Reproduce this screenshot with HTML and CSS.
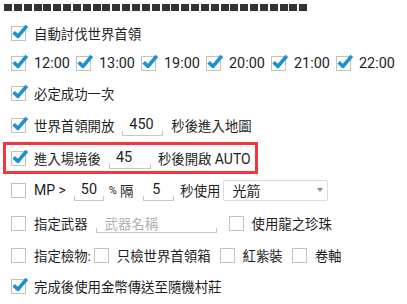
FILE: index.html
```html
<!DOCTYPE html>
<html lang="zh-Hant">
<head>
    <meta charset="UTF-8">
    <meta name="viewport" content="width=device-width, initial-scale=1.0">
    <title>世界首領設定</title>
    <link rel="stylesheet" href="styles.css">
</head>
<body>
    <div class="page">
        <div class="tofu">
            <span></span><span></span><span></span><span></span><span></span><span></span><span></span><span></span>
            <span></span><span></span><span></span><span></span><span></span><span></span><span></span><span></span>
            <span></span><span></span><span></span><span></span><span></span><span></span><span></span><span></span>
            <span></span><span></span><span></span><span></span><span></span><span></span><span></span>
        </div>

        <div class="row">
            <svg class="cb" viewBox="0 0 15 15"><rect x="0.5" y="0.5" width="14" height="14"/><path d="M2.6 6.2 L7 10.4 L15.8 -0.2"/></svg>
            <span>自動討伐世界首領</span>
        </div>

        <div class="row">
            <label class="time"><svg class="cb" viewBox="0 0 15 15"><rect x="0.5" y="0.5" width="14" height="14"/><path d="M2.6 6.2 L7 10.4 L15.8 -0.2"/></svg>12:00</label>
            <label class="time"><svg class="cb" viewBox="0 0 15 15"><rect x="0.5" y="0.5" width="14" height="14"/><path d="M2.6 6.2 L7 10.4 L15.8 -0.2"/></svg>13:00</label>
            <label class="time"><svg class="cb" viewBox="0 0 15 15"><rect x="0.5" y="0.5" width="14" height="14"/><path d="M2.6 6.2 L7 10.4 L15.8 -0.2"/></svg>19:00</label>
            <label class="time"><svg class="cb" viewBox="0 0 15 15"><rect x="0.5" y="0.5" width="14" height="14"/><path d="M2.6 6.2 L7 10.4 L15.8 -0.2"/></svg>20:00</label>
            <label class="time"><svg class="cb" viewBox="0 0 15 15"><rect x="0.5" y="0.5" width="14" height="14"/><path d="M2.6 6.2 L7 10.4 L15.8 -0.2"/></svg>21:00</label>
            <label class="time"><svg class="cb" viewBox="0 0 15 15"><rect x="0.5" y="0.5" width="14" height="14"/><path d="M2.6 6.2 L7 10.4 L15.8 -0.2"/></svg>22:00</label>
        </div>

        <div class="row">
            <svg class="cb" viewBox="0 0 15 15"><rect x="0.5" y="0.5" width="14" height="14"/><path d="M2.6 6.2 L7 10.4 L15.8 -0.2"/></svg>
            <span>必定成功一次</span>
        </div>

        <div class="row tall">
            <svg class="cb" viewBox="0 0 15 15"><rect x="0.5" y="0.5" width="14" height="14"/><path d="M2.6 6.2 L7 10.4 L15.8 -0.2"/></svg>
            <span>世界首領開放</span>
            <span class="field w-450">450</span>
            <span>秒後進入地圖</span>
        </div>

        <div class="row boxed">
            <svg class="cb" viewBox="0 0 15 15"><rect x="0.5" y="0.5" width="14" height="14"/><path d="M2.6 6.2 L7 10.4 L15.8 -0.2"/></svg>
            <span>進入場境後</span>
            <span class="field w-45">45</span>
            <span>秒後開啟 <span class="latin">AUTO</span></span>
        </div>

        <div class="row mid">
            <svg class="cb" viewBox="0 0 15 15"><rect x="0.5" y="0.5" width="14" height="14"/></svg>
            <span class="latin">MP &gt;</span>
            <span class="field w-50">50</span>
            <span class="pct">%</span><span>隔</span>
            <span class="field w-5">5</span>
            <span>秒使用</span>
            <span class="select">光箭<i class="caret"></i></span>
        </div>

        <div class="row tall">
            <svg class="cb" viewBox="0 0 15 15"><rect x="0.5" y="0.5" width="14" height="14"/></svg>
            <span>指定武器</span>
            <span class="field weapon">武器名稱</span>
            <svg class="cb" viewBox="0 0 15 15"><rect x="0.5" y="0.5" width="14" height="14"/></svg>
            <span>使用龍之珍珠</span>
        </div>

        <div class="row">
            <svg class="cb" viewBox="0 0 15 15"><rect x="0.5" y="0.5" width="14" height="14"/></svg>
            <span class="tight">指定檢物:</span>
            <svg class="cb" viewBox="0 0 15 15"><rect x="0.5" y="0.5" width="14" height="14"/></svg>
            <span class="opt">只檢世界首領箱</span>
            <svg class="cb" viewBox="0 0 15 15"><rect x="0.5" y="0.5" width="14" height="14"/></svg>
            <span class="opt">紅紫裝</span>
            <svg class="cb" viewBox="0 0 15 15"><rect x="0.5" y="0.5" width="14" height="14"/></svg>
            <span>卷軸</span>
        </div>

        <div class="row last">
            <svg class="cb" viewBox="0 0 15 15"><rect x="0.5" y="0.5" width="14" height="14"/><path d="M2.6 6.2 L7 10.4 L15.8 -0.2"/></svg>
            <span>完成後使用金幣傳送至隨機村莊</span>
        </div>
    </div>
</body>
</html>
```

FILE: styles.css
```css
body {
    margin: 0;
    font-family: Roboto, "Noto Sans CJK TC", sans-serif;
    font-size: 13.4px;
    color: #1e1e1e;
    background-color: #fff;
}
.page {
    padding: 0 11px;
}
.tofu {
    display: flex;
    gap: 1.85px;
    height: 18px;
    padding-top: 4px;
    margin-left: -7px;
    box-sizing: border-box;
}
.tofu span {
    width: 8px;
    height: 7px;
    background-color: #333;
}
.row {
    display: flex;
    align-items: center;
    height: 30px;
    white-space: nowrap;
}
.row.tall {
    height: 34px;
}
.row.mid {
    height: 32px;
}
.row.last {
    height: 32px;
}
.row.boxed {
    height: 32px;
    box-sizing: border-box;
    width: 255px;
    margin-left: -8px;
    padding-left: 5px;
    border: 3px solid #f2373c;
}
.cb {
    flex: none;
    width: 15px;
    height: 15px;
    margin-right: 8px;
    overflow: visible;
}
.cb rect {
    fill: #fff;
    stroke: #c2c2c2;
    stroke-width: 1;
}
.cb path {
    fill: none;
    stroke: #1b92d4;
    stroke-width: 3.6;
    stroke-linejoin: round;
}
.time {
    display: flex;
    align-items: center;
    width: 65px;
    flex: none;
    font-size: 14.4px;
}
.latin {
    font-size: 14px;
}
.field {
    display: flex;
    align-items: center;
    box-sizing: border-box;
    height: 22px;
    margin: 0 8px;
    padding-left: 7px;
    font-size: 14.4px;
    border-bottom: 1px solid #c6c6c6;
    background:
        linear-gradient(#c6c6c6, #c6c6c6) left bottom / 1px 4px no-repeat,
        linear-gradient(#c6c6c6, #c6c6c6) right bottom / 1px 4px no-repeat;
}
.w-450 { width: 41px; }
.w-45 { width: 42px; margin-right: 7px; }
.w-50 { width: 30px; margin-right: 5px; }
.w-5 { width: 31px; padding-left: 9px; margin: 0 6px 0 10px; }
.field.weapon {
    width: 121px;
    height: 20px;
    padding-left: 9px;
    margin-right: 12px;
    color: #b0b0b0;
    font-size: 13.4px;
}
.pct {
    font-size: 11px;
    margin-right: 3px;
}
.select {
    display: flex;
    align-items: center;
    justify-content: space-between;
    box-sizing: border-box;
    width: 105px;
    height: 21px;
    margin-left: 3px;
    padding: 0 4px 0 8px;
    font-size: 14px;
    border: 1px solid #dcdcdc;
    border-radius: 2px;
}
.caret {
    width: 0;
    height: 0;
    border-left: 3.5px solid transparent;
    border-right: 3.5px solid transparent;
    border-top: 4px solid #8a8a8a;
}
.tight {
    margin-right: 3px;
}
.opt {
    margin-right: 9px;
}
```
